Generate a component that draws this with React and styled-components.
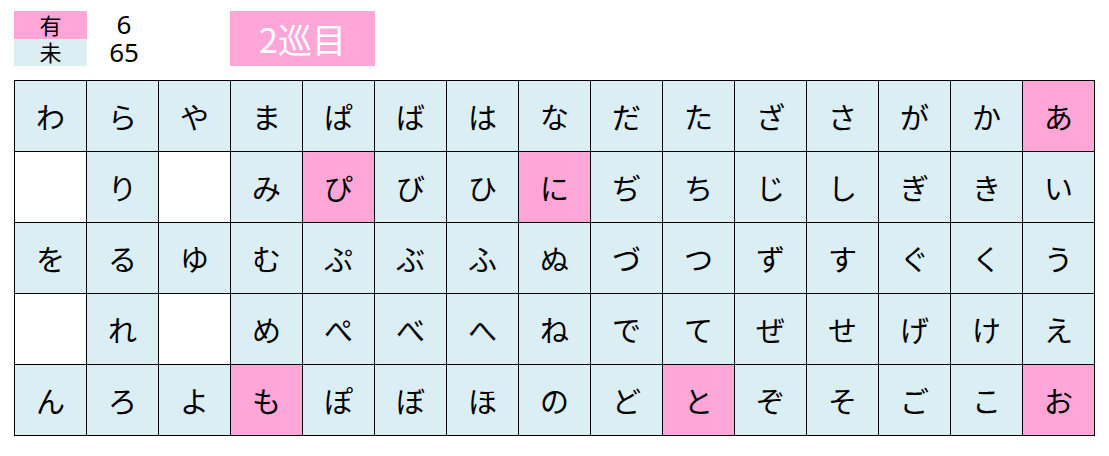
import React from "react";
import styled, { createGlobalStyle } from "styled-components";

const Global = createGlobalStyle`
  html, body { margin: 0; padding: 0; background: #fff; }
  body { font-family: "Noto Sans CJK JP", "Noto Sans", sans-serif; color: #000; }
`;

const PINK = "#ffa6d8";
const BLUE = "#daeef3";

const Page = styled.div`
  padding: 11px 0 0 14px;
`;

const Header = styled.div`
  display: flex;
  align-items: flex-start;
  height: 55px;
  margin-bottom: 14px;
`;

const Legend = styled.div`
  display: grid;
  grid-template-columns: 73px 72px;
  grid-auto-rows: 27.5px;
`;

const LegendKey = styled.div`
  background: ${(p) => p.$bg};
  display: flex;
  align-items: center;
  justify-content: center;
  font-size: 22px;
  line-height: 0.9;
`;

const LegendValue = styled.div`
  display: flex;
  align-items: center;
  justify-content: center;
  font-family: "Noto Sans", "Open Sans", sans-serif;
  font-size: 26px;
  line-height: 0.9;
  padding-left: 2px;
`;

const RoundButton = styled.div`
  margin-left: 71px;
  width: 145px;
  height: 55px;
  background: ${PINK};
  color: #fff;
  display: flex;
  align-items: center;
  justify-content: center;
  font-size: 34px;
  line-height: 1;
`;

const Grid = styled.div`
  display: grid;
  grid-template-columns: repeat(15, 72px);
  grid-auto-rows: 71px;
  width: 1081px;
  border-left: 1px solid #000;
  border-top: 1px solid #000;
  box-sizing: border-box;
`;

const Cell = styled.div`
  border-right: 1px solid #000;
  border-bottom: 1px solid #000;
  background: ${(p) => (p.$state === "has" ? PINK : p.$state === "empty" ? "#fff" : BLUE)};
  display: flex;
  align-items: center;
  justify-content: center;
  font-size: 29px;
  line-height: 1;
`;

const rows = [
  "わらやまぱばはなだたざさがかあ",
  " り みぴびひにぢちじしぎきい",
  "をるゆむぷぶふぬづつずすぐくう",
  " れ めぺべへねでてぜせげけえ",
  "んろよもぽぼほのどとぞそごこお",
];

const has = new Set(["あ", "ぴ", "に", "も", "と", "お"]);

export default function App() {
  return (
    <>
      <Global />
      <Page>
        <Header>
          <Legend>
            <LegendKey $bg={PINK}>有</LegendKey>
            <LegendValue>6</LegendValue>
            <LegendKey $bg={BLUE}>未</LegendKey>
            <LegendValue>65</LegendValue>
          </Legend>
          <RoundButton>2巡目</RoundButton>
        </Header>
        <Grid>
          {rows.map((r, ri) =>
            Array.from(r).map((ch, ci) => (
              <Cell
                key={`${ri}-${ci}`}
                $state={ch === " " ? "empty" : has.has(ch) ? "has" : "none"}
              >
                {ch === " " ? "" : ch}
              </Cell>
            ))
          )}
        </Grid>
      </Page>
    </>
  );
}
